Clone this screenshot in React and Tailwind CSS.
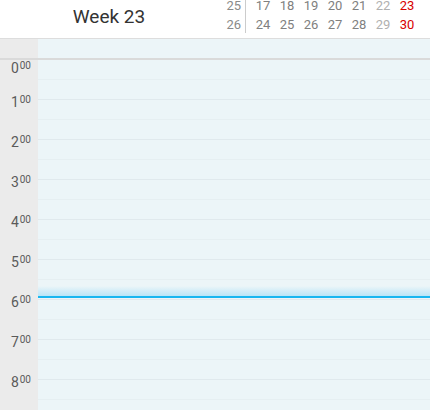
import React from 'react'

const weeks = [
  { num: 25, days: [17, 18, 19, 20, 21, 22, 23] },
  { num: 26, days: [24, 25, 26, 27, 28, 29, 30] },
]

const hours = [0, 1, 2, 3, 4, 5, 6, 7, 8]

function dayColor(i) {
  if (i === 6) return 'text-[#d80000]'
  if (i === 5) return 'text-[#b0b0b0]'
  return 'text-[#808080]'
}

export default function App() {
  return (
    <div
      className="w-[430px] h-[410px] overflow-hidden bg-white"
      style={{ fontFamily: 'Roboto, "Liberation Sans", sans-serif' }}
    >
      {/* Header */}
      <header className="h-[39px] flex bg-white border-b border-[#dddddd] overflow-hidden">
        <div className="w-[218px] flex justify-center pt-[5px]">
          <span className="text-[19px] leading-[24px] text-[#333333]">Week 23</span>
        </div>
        <div className="flex -mt-[4px] ml-[4px]">
          <div className="w-[19px] text-right text-[13px] leading-[19px] text-[#8a8a8a]">
            {weeks.map((w) => (
              <div key={w.num}>{w.num}</div>
            ))}
          </div>
          <div className="ml-[4px] w-px h-[37px] bg-[#cccccc]" />
          <div className="ml-[5px]">
            {weeks.map((w) => (
              <div key={w.num} className="flex text-[13px] leading-[19px]">
                {w.days.map((d, i) => (
                  <span key={d} className={`w-[24px] text-center ${dayColor(i)}`}>
                    {d}
                  </span>
                ))}
              </div>
            ))}
          </div>
        </div>
      </header>

      {/* All-day row */}
      <div className="flex h-[19px] border-b-2 border-[#dadada] box-content">
        <div className="w-[38px] bg-[#ebebeb]" />
        <div className="flex-1 bg-[#ecf5f8]" />
      </div>

      {/* Hours */}
      <div className="flex">
        <div className="w-[38px] bg-[#ebebeb]">
          {hours.map((h) => (
            <div key={h} className="h-[40px] flex flex-col">
              <div
                className={`flex justify-end pr-[7px] text-[#5a5a5a] ${
                  h === 0 ? 'mt-[1px]' : '-mt-[5px]'
                }`}
              >
                <span className="text-[14px] leading-[14px]">{h}</span>
                <span className="text-[10px] leading-[10px] ml-px">00</span>
              </div>
            </div>
          ))}
        </div>
        <div className="relative flex-1 bg-[#ecf5f8]">
          {hours.map((h) => (
            <div key={h} className="h-[40px] flex flex-col">
              <div className="h-[20px] border-b border-[#e6eff2]" />
              <div className="h-[20px] border-b border-[#e0e9ed]" />
            </div>
          ))}
          {/* Current time */}
          <div className="absolute left-0 right-0 top-[226px] h-[10px] bg-gradient-to-b from-[#ecf5f8]/0 to-[#b9e5f7]" />
          <div className="absolute left-0 right-0 top-[236px] h-[2px] bg-[#18b6f0]" />
        </div>
      </div>
    </div>
  )
}
